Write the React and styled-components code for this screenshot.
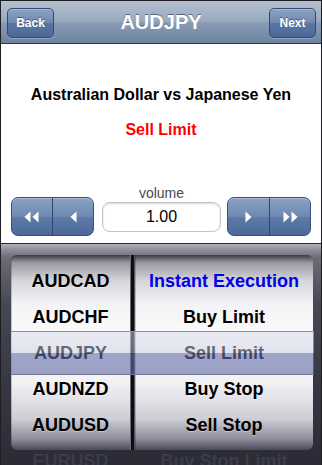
import React from "react";
import styled, { createGlobalStyle } from "styled-components";

const Global = createGlobalStyle`
  html, body { margin: 0; padding: 0; background: #fff; overflow: hidden; }
  body { font-family: "Liberation Sans", Arial, sans-serif; }
  * { box-sizing: border-box; }
`;

const Screen = styled.div`
  width: 322px;
  height: 465px;
  border: 1px solid #1e1e22;
  border-bottom: none;
  display: flex;
  flex-direction: column;
  overflow: hidden;
  background: #fff;
`;

const NavBar = styled.div`
  height: 43px;
  flex: none;
  display: flex;
  align-items: center;
  justify-content: space-between;
  padding: 0 5px 0 6px;
  background: linear-gradient(to bottom, #b4c0d0 0%, #97a8bf 50%, #8a9db6 51%, #6d83a1 100%);
  border-bottom: 1px solid #2d3642;
  position: relative;
`;

const Title = styled.div`
  position: absolute;
  left: 0;
  right: 0;
  top: 0;
  bottom: 0;
  display: flex;
  align-items: center;
  justify-content: center;
  font-size: 20px;
  font-weight: bold;
  color: #fff;
  text-shadow: 0 -1px 0 rgba(40, 50, 70, 0.6);
  pointer-events: none;
`;

const BarButton = styled.button`
  position: relative;
  z-index: 1;
  width: 47px;
  height: 30px;
  margin-top: 1px;
  border-radius: 5px;
  border: 1px solid #34496b;
  background: linear-gradient(to bottom, #8ea3c3 0%, #6e88ae 50%, #5a76a2 51%, #4b6999 100%);
  box-shadow: inset 0 1px 0 rgba(255, 255, 255, 0.25), 0 1px 0 rgba(255, 255, 255, 0.25);
  color: #fff;
  font-family: "Liberation Sans", Arial, sans-serif;
  font-size: 12px;
  font-weight: bold;
  text-shadow: 0 -1px 0 rgba(0, 0, 0, 0.4);
  padding: 0;
`;

const Content = styled.div`
  flex: 1;
  display: flex;
  flex-direction: column;
  align-items: center;
  padding-top: 41px;
  background: #fff;
`;

const PairName = styled.div`
  font-size: 16px;
  line-height: 20px;
  font-weight: bold;
  color: #000;
`;

const OrderType = styled.div`
  margin-top: 15px;
  font-size: 16px;
  line-height: 20px;
  font-weight: bold;
  color: #ff0000;
`;

const Controls = styled.div`
  margin-top: 45px;
  width: 100%;
  display: flex;
  align-items: flex-end;
  padding: 0 10px;
`;

const StepGroup = styled.div`
  width: ${(p) => p.$w}px;
  height: 39px;
  display: flex;
  border-radius: 7px;
  border: 1px solid #35507c;
  overflow: hidden;
  background: linear-gradient(to bottom, #8aa1c4 0%, #6f89b2 50%, #5f7ba8 51%, #4a6899 100%);
  box-shadow: inset 0 1px 0 rgba(255, 255, 255, 0.3);
`;

const StepButton = styled.button`
  flex: 1;
  border: none;
  background: transparent;
  padding: 0;
  display: flex;
  align-items: center;
  justify-content: center;
  & + & {
    border-left: 1px solid #2d4670;
  }
`;

const VolumeColumn = styled.div`
  width: 119px;
  margin: 0 6px 0 8px;
  padding-bottom: 4px;
  display: flex;
  flex-direction: column;
  align-items: center;
`;

const VolumeLabel = styled.div`
  height: 17px;
  font-size: 14px;
  line-height: 16px;
  color: #4a4a4a;
`;

const VolumeInput = styled.div`
  width: 119px;
  height: 30px;
  border-radius: 8px;
  border: 1px solid #c4c4c4;
  box-shadow: inset 0 1px 2px rgba(0, 0, 0, 0.15);
  display: flex;
  align-items: center;
  justify-content: center;
  font-size: 16px;
  color: #000;
  background: #fff;
`;

const Picker = styled.div`
  position: relative;
  flex: none;
  height: 222px;
  border-top: 1px solid #2b2b33;
  padding: 11px 8px 0 10px;
  background:
    linear-gradient(to bottom, #b0b1b8 0px, #8c8d96 6px, #6a6b76 14px, #474855 60px, #363743 140px, #2a2b35 222px);
`;

const Wheels = styled.div`
  display: flex;
  gap: 5px;
  height: 195px;
  background: linear-gradient(
    to right,
    transparent 119px,
    #6c6c76 119px,
    #6c6c76 120px,
    #0d0d10 120px,
    #0d0d10 123px,
    #55555f 123px,
    #55555f 124px,
    transparent 124px
  );
`;

const Wheel = styled.div`
  width: ${(p) => p.$w}px;
  height: 195px;
  padding-top: 8px;
  display: flex;
  flex-direction: column;
  border-radius: ${(p) => (p.$side === "left" ? "6px 0 0 6px" : "0 6px 6px 0")};
  background: linear-gradient(
    to bottom,
    #3b3b42 0%,
    #9a9aa3 4%,
    #d4d4da 13%,
    #f3f3f5 25%,
    #fdfdfd 45%,
    #f1f1f4 66%,
    #cdcdd5 84%,
    #90909e 94%,
    #4a4a58 100%
  );
  box-shadow: inset 1px 0 0 rgba(0, 0, 0, 0.2);
`;

const Row = styled.div`
  height: 36px;
  flex: none;
  display: flex;
  align-items: center;
  justify-content: center;
  font-size: 18px;
  font-weight: bold;
  white-space: nowrap;
  color: ${(p) => (p.$dim ? "#3c3c48" : p.$blue ? "#0000e6" : "#000")};
  text-shadow: ${(p) => (p.$dim || p.$blue ? "none" : "0 1px 0 rgba(255,255,255,0.35)")};
`;

const SelectionBar = styled.div`
  position: absolute;
  left: 10px;
  right: 7px;
  top: 87px;
  height: 44px;
  border-top: 1px solid #8b90a8;
  border-bottom: 1px solid #757a94;
  background: linear-gradient(
    to bottom,
    rgba(215, 217, 232, 0.5) 0%,
    rgba(200, 203, 224, 0.5) 50%,
    rgba(100, 110, 168, 0.6) 50%,
    rgba(100, 110, 168, 0.62) 100%
  );
  pointer-events: none;
`;

const Tri = ({ dir = "left" }) => (
  <svg width="7" height="12" viewBox="0 0 7 12">
    {dir === "left" ? (
      <path d="M0.5 6 L6.5 0.5 L6.5 11.5 Z" fill="#fff" />
    ) : (
      <path d="M6.5 6 L0.5 0.5 L0.5 11.5 Z" fill="#fff" />
    )}
  </svg>
);

const DoubleTri = ({ dir = "left" }) => (
  <svg width="16" height="12" viewBox="0 0 16 12">
    {dir === "left" ? (
      <>
        <path d="M0.5 6 L6.5 0.5 L6.5 11.5 Z" fill="#fff" />
        <path d="M8.5 6 L14.5 0.5 L14.5 11.5 Z" fill="#fff" />
      </>
    ) : (
      <>
        <path d="M15.5 6 L9.5 0.5 L9.5 11.5 Z" fill="#fff" />
        <path d="M7.5 6 L1.5 0.5 L1.5 11.5 Z" fill="#fff" />
      </>
    )}
  </svg>
);

const symbols = ["AUDCAD", "AUDCHF", "AUDJPY", "AUDNZD", "AUDUSD", "EURUSD"];
const types = ["Instant Execution", "Buy Limit", "Sell Limit", "Buy Stop", "Sell Stop", "Buy Stop Limit"];

export default function App() {
  return (
    <>
      <Global />
      <Screen>
        <NavBar>
          <BarButton>Back</BarButton>
          <Title>AUDJPY</Title>
          <BarButton>Next</BarButton>
        </NavBar>
        <Content>
          <PairName>Australian Dollar vs Japanese Yen</PairName>
          <OrderType>Sell Limit</OrderType>
          <Controls>
            <StepGroup $w={83}>
              <StepButton><DoubleTri dir="left" /></StepButton>
              <StepButton><Tri dir="left" /></StepButton>
            </StepGroup>
            <VolumeColumn>
              <VolumeLabel>volume</VolumeLabel>
              <VolumeInput>1.00</VolumeInput>
            </VolumeColumn>
            <StepGroup $w={84}>
              <StepButton><Tri dir="right" /></StepButton>
              <StepButton><DoubleTri dir="right" /></StepButton>
            </StepGroup>
          </Controls>
        </Content>
        <Picker>
          <Wheels>
            <Wheel $w={119} $side="left">
              {symbols.map((s, i) => (
                <Row key={s} $dim={i === 5}>{s}</Row>
              ))}
            </Wheel>
            <Wheel $w={178} $side="right">
              {types.map((t, i) => (
                <Row key={t} $blue={i === 0} $dim={i === 5}>{t}</Row>
              ))}
            </Wheel>
          </Wheels>
          <SelectionBar />
        </Picker>
      </Screen>
    </>
  );
}
